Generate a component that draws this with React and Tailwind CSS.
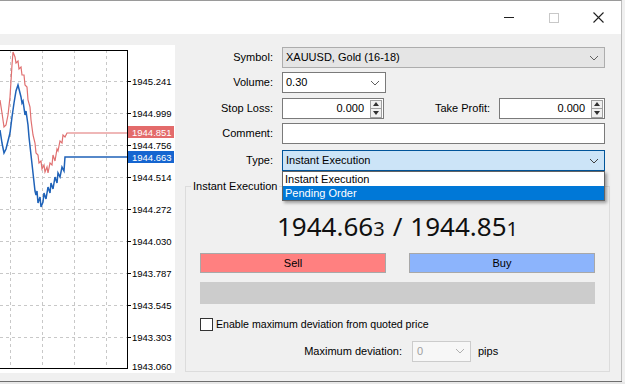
import React from "react";

const ui = { fontFamily: '"Liberation Sans", Arial, sans-serif' };

function Chevron({ color = "#606060" }) {
  return (
    <svg width="10" height="6" viewBox="0 0 10 6">
      <path d="M1 1 L5 5 L9 1" fill="none" stroke={color} strokeWidth="1" />
    </svg>
  );
}

function Spin() {
  return (
    <div className="flex flex-col w-[12px] h-[18px] border border-[#a0a0a0] bg-[#f0f0f0]">
      <div className="flex-1 flex items-center justify-center border-b border-[#a0a0a0]">
        <svg width="6" height="4" viewBox="0 0 6 4"><path d="M0 4 L3 0 L6 4Z" fill="#303030" /></svg>
      </div>
      <div className="flex-1 flex items-center justify-center">
        <svg width="6" height="4" viewBox="0 0 6 4"><path d="M0 0 L3 4 L6 0Z" fill="#303030" /></svg>
      </div>
    </div>
  );
}

function Chart() {
  const hLines = [36, 68, 100, 132, 164, 196, 228, 260, 292];
  const labels = [
    ["1945.241", 36],
    ["1944.999", 68],
    ["1944.756", 100],
    ["1944.514", 132],
    ["1944.272", 164],
    ["1944.030", 196],
    ["1943.787", 228],
    ["1943.545", 260],
    ["1943.303", 292],
    ["1943.060", 321],
  ];
  const vLines = [10, 42, 74, 106];
  const red =
    "0,55 2,68 4,82 6,80 8,70 10,52 12,20 13,7 15,12 16,18 18,16 19,24 21,22 22,30 24,30 25,40 27,42 28,55 30,62 31,75 33,90 35,98 36,108 38,110 39,118 41,116 42,124 44,120 45,127 47,122 48,128 50,118 52,120 53,110 55,116 57,104 58,106 60,96 62,98 63,90 65,92 67,88 127,88";
  const blue =
    "0,85 2,98 4,108 6,104 8,96 10,88 12,72 14,58 16,46 18,40 19,44 21,52 22,58 23,56 25,70 26,66 28,80 29,92 31,110 33,128 35,146 36,150 37,146 38,158 40,152 41,162 43,157 44,148 46,154 48,142 50,148 51,138 53,144 55,132 57,138 58,128 60,132 62,122 64,126 65,112 67,112 127,112";
  const lf = '"Liberation Sans", Arial, sans-serif';
  return (
    <svg width="175" height="328" viewBox="0 0 175 328" className="block">
      <rect x="0" y="0" width="175" height="328" fill="#ffffff" />
      {hLines.map((y) => (
        <line key={y} x1="0" y1={y + 0.5} x2="127" y2={y + 0.5} stroke="#c8c8c8" strokeDasharray="3 3" />
      ))}
      {vLines.map((x) => (
        <line key={x} x1={x + 0.5} y1="5" x2={x + 0.5} y2="323" stroke="#c8c8c8" strokeDasharray="3 3" />
      ))}
      <polyline points={red} fill="none" stroke="#e07070" strokeWidth="1.2" />
      <polyline points={blue} fill="none" stroke="#1f62b8" strokeWidth="1.5" />
      <line x1="0" y1="5.5" x2="127" y2="5.5" stroke="#000" />
      <line x1="127.5" y1="5" x2="127.5" y2="324" stroke="#000" />
      <line x1="0" y1="323.5" x2="128" y2="323.5" stroke="#000" />
      {hLines.map((y) => (
        <line key={"t" + y} x1="128" y1={y + 0.5} x2="131" y2={y + 0.5} stroke="#000" />
      ))}
      {labels.map(([t, y]) => (
        <text key={t} x="132" y={y + 4} fontSize="9.5" fill="#000" fontFamily={lf}>
          {t}
        </text>
      ))}
      <rect x="128" y="81" width="46" height="12" fill="#e36b6b" />
      <text x="132" y="91" fontSize="9.5" fill="#fff" fontFamily={lf}>1944.851</text>
      <rect x="128" y="106" width="46" height="12" fill="#1565d0" />
      <text x="132" y="116" fontSize="9.5" fill="#fff" fontFamily={lf}>1944.663</text>
    </svg>
  );
}

function Label({ children }) {
  return <div className="w-[100px] text-right pr-[9px] shrink-0">{children}</div>;
}

export default function App() {
  return (
    <div className="w-[625px] h-[384px] overflow-hidden bg-[#f0f0f0] text-[11px] text-black flex flex-col" style={ui}>
      {/* title bar */}
      <div className="h-[34px] bg-white border-t border-[#9a9a9a] border-r border-r-[#bdbdbd] mr-[3px] flex items-center justify-end shrink-0">
        <div className="w-[45px] flex justify-center">
          <div className="w-[10px] h-[1px] bg-[#202020]" />
        </div>
        <div className="w-[45px] flex justify-center">
          <div className="w-[10px] h-[10px] border border-[#c8c8c8]" />
        </div>
        <div className="w-[45px] flex justify-center">
          <svg width="11" height="11" viewBox="0 0 11 11">
            <path d="M0.5 0.5 L10.5 10.5 M10.5 0.5 L0.5 10.5" stroke="#202020" strokeWidth="1.1" />
          </svg>
        </div>
      </div>
      {/* body */}
      <div className="flex h-[347px] shrink-0 border-r border-[#bdbdbd] mr-[3px]">
        <div className="w-[175px] pt-[11px] shrink-0">
          <Chart />
        </div>
        <div className="flex-1 relative">
          <div className="ml-[7px] pt-[13px] pr-[16px]">
            {/* Symbol */}
            <div className="flex items-center h-[21px]">
              <Label>Symbol:</Label>
              <div className="flex-1 h-[21px] bg-[#e5e5e5] border border-[#adadad] flex items-center justify-between pl-[3px] pr-[5px]">
                <span>XAUUSD, Gold (16-18)</span>
                <Chevron />
              </div>
            </div>
            {/* Volume */}
            <div className="flex items-center h-[21px] mt-[4px]">
              <Label>Volume:</Label>
              <div className="w-[104px] h-[21px] bg-white border border-[#7a7a7a] flex items-center justify-between pl-[3px] pr-[5px]">
                <span>0.30</span>
                <Chevron />
              </div>
            </div>
            {/* SL / TP */}
            <div className="flex items-center h-[21px] mt-[5px]">
              <Label>Stop Loss:</Label>
              <div className="w-[102px] h-[21px] bg-white border border-[#7a7a7a] flex items-center justify-end pr-[1px]">
                <span className="mr-[6px]">0.000</span>
                <Spin />
              </div>
              <div className="flex-1 text-right pr-[9px]">Take Profit:</div>
              <div className="w-[106px] h-[21px] bg-white border border-[#7a7a7a] flex items-center justify-end pr-[1px]">
                <span className="mr-[6px]">0.000</span>
                <Spin />
              </div>
            </div>
            {/* Comment */}
            <div className="flex items-center h-[21px] mt-[4px]">
              <Label>Comment:</Label>
              <div className="flex-1 h-[21px] bg-white border border-[#7a7a7a]" />
            </div>
            {/* Type */}
            <div className="flex items-center h-[21px] mt-[6px]">
              <Label>Type:</Label>
              <div className="flex-1 h-[21px] bg-[#cce4f7] border border-[#005499] flex items-center justify-between pl-[3px] pr-[5px]">
                <span>Instant Execution</span>
                <Chevron color="#404040" />
              </div>
            </div>
          </div>

          {/* group box */}
          <div className="relative ml-[10px] mr-[11px] mt-[15px] h-[186px] border border-[#dcdcdc]">
            <div className="absolute -top-[9px] left-[5px] px-[2px] bg-[#f0f0f0] leading-[16px]">Instant Execution</div>
            <div className="flex justify-center items-baseline mt-[22px] h-[34px] text-[#101010]" style={{ fontFamily: '"Noto Sans", sans-serif' }}>
              <span className="text-[26px] leading-[34px]">1944.66</span>
              <span className="text-[20px] leading-[34px]">3</span>
              <span className="text-[26px] leading-[34px] mx-[8px]">/</span>
              <span className="text-[26px] leading-[34px]">1944.85</span>
              <span className="text-[20px] leading-[34px]">1</span>
            </div>
            <div className="flex justify-between px-[14px] mt-[10px]">
              <div className="w-[186px] h-[20px] bg-[#ff8080] border border-[#a8a8a8] flex items-center justify-center text-[11px]">Sell</div>
              <div className="w-[186px] h-[20px] bg-[#8cb4fc] border border-[#a8a8a8] flex items-center justify-center text-[11px]">Buy</div>
            </div>
            <div className="mx-[14px] mt-[9px] h-[22px] bg-[#cccccc]" />
            <div className="flex items-center mt-[13px] ml-[14px]">
              <div className="w-[13px] h-[13px] bg-white border border-[#333333]" />
              <span className="ml-[3px] text-[10.6px]">Enable maximum deviation from quoted price</span>
            </div>
            <div className="flex items-center mt-[8px] h-[21px]">
              <div className="w-[226px] text-right pr-[10px]">Maximum deviation:</div>
              <div className="w-[59px] h-[21px] bg-[#f7f7f7] border border-[#cccccc] flex items-center justify-between pl-[4px] pr-[5px]">
                <span className="text-[#a0a0a0]">0</span>
                <Chevron color="#b0b0b0" />
              </div>
              <span className="ml-[7px]">pips</span>
            </div>
          </div>

          {/* open dropdown */}
          <div className="absolute left-[107px] top-[137px] w-[323px] bg-white border border-[#646464] shadow-[2px_2px_3px_rgba(0,0,0,0.35)]">
            <div className="h-[14px] leading-[14px] pl-[2px]">Instant Execution</div>
            <div className="h-[14px] leading-[14px] pl-[2px] bg-[#0078d7] text-white">Pending Order</div>
          </div>
        </div>
      </div>
      <div className="h-[1px] bg-[#6e6e6e] mr-[3px]" />
      <div className="flex-1 bg-[#e8e8e8]" />
    </div>
  );
}
